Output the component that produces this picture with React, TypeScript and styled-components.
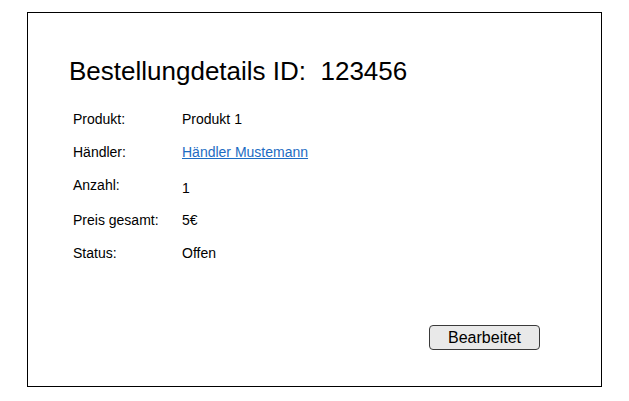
import React from "react";
import styled, { createGlobalStyle } from "styled-components";

const GlobalStyle = createGlobalStyle`
  html, body {
    margin: 0;
    padding: 0;
    background: #ffffff;
    font-family: "Liberation Sans", Arial, sans-serif;
    color: #000000;
  }
`;

interface DetailRow {
  label: string;
  value: string;
  link?: boolean;
  nudge?: number;
  labelNudge?: number;
}

const rows: DetailRow[] = [
  { label: "Produkt:", value: "Produkt 1" },
  { label: "Händler:", value: "Händler Mustemann", link: true, labelNudge: -1, nudge: -1 },
  { label: "Anzahl:", value: "1", labelNudge: -1, nudge: 2 },
  { label: "Preis gesamt:", value: "5€" },
  { label: "Status:", value: "Offen" },
];

export default function App() {
  return (
    <>
      <GlobalStyle />
      <Page>
        <Card>
          <Title>Bestellungdetails ID:&nbsp; 123456</Title>
          <Details>
            {rows.map((row) => (
              <React.Fragment key={row.label}>
                <Label $nudge={row.labelNudge ?? 0}>{row.label}</Label>
                {row.link ? (
                  <ValueLink href="#" $nudge={row.nudge ?? 0}>
                    {row.value}
                  </ValueLink>
                ) : (
                  <Value $nudge={row.nudge ?? 0}>{row.value}</Value>
                )}
              </React.Fragment>
            ))}
          </Details>
          <Footer>
            <EditButton type="button">Bearbeitet</EditButton>
          </Footer>
        </Card>
      </Page>
    </>
  );
}

const Page = styled.div`
  padding: 12px 0 0 27px;
`;

const Card = styled.div`
  box-sizing: border-box;
  width: 575px;
  height: 375px;
  border: 1px solid #000000;
  display: flex;
  flex-direction: column;
  padding: 43px 0 36px 41px;
`;

const Title = styled.h1`
  margin: 0;
  font-size: 26px;
  font-weight: 400;
  line-height: 30px;
`;

const Details = styled.div`
  display: grid;
  grid-template-columns: 109px auto;
  grid-auto-rows: 16px;
  row-gap: 17.5px;
  margin-top: 25px;
  padding-left: 4px;
  font-size: 14px;
  line-height: 16px;
`;

const Label = styled.div<{ $nudge: number }>`
  position: relative;
  top: ${(p) => p.$nudge}px;
`;

const Value = styled.div<{ $nudge: number }>`
  position: relative;
  top: ${(p) => p.$nudge}px;
`;

const ValueLink = styled.a<{ $nudge: number }>`
  position: relative;
  top: ${(p) => p.$nudge}px;
  color: #1d6cc3;
  text-decoration: underline;
  justify-self: start;
`;

const Footer = styled.div`
  margin-top: auto;
  display: flex;
  justify-content: flex-end;
  padding-right: 61px;
`;

const EditButton = styled.button`
  box-sizing: border-box;
  width: 111px;
  height: 25px;
  padding: 0;
  border: 1px solid #3a3a3a;
  border-radius: 4px;
  background: #e9e9e9;
  font-family: "Liberation Sans", Arial, sans-serif;
  font-size: 16px;
  color: #000000;
  cursor: pointer;
`;
